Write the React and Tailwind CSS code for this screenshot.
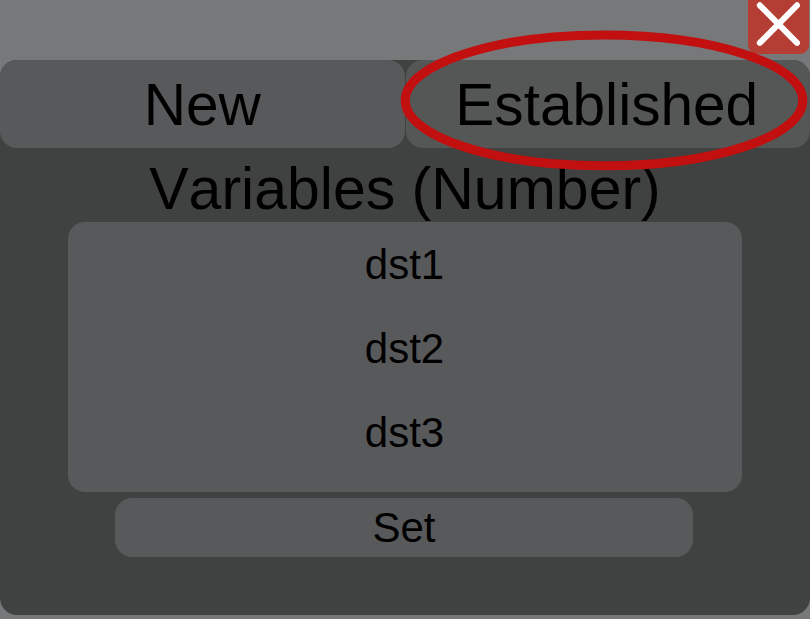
const variables = ["dst1", "dst2", "dst3"];

function CloseButton() {
  return (
    <button
      aria-label="Close"
      className="flex h-[54px] w-[61px] justify-center rounded-b-[9px] bg-[#b43e34]"
    >
      <svg width="61" height="54" viewBox="0 0 61 54" fill="none">
        <path d="M11.8 5.3 49 42.9M49 5.3 11.8 42.9" stroke="#fff" strokeWidth="6" strokeLinecap="round" />
      </svg>
    </button>
  );
}

export default function App() {
  return (
    <div className="relative flex h-[619px] w-[810px] flex-col overflow-hidden bg-[#77787a] font-['Liberation_Sans',Arial,sans-serif] text-black">
      <header className="flex h-[60px] shrink-0 justify-end pr-px">
        <CloseButton />
      </header>

      <main className="flex h-[555px] flex-col items-center rounded-[17px] bg-[#404241]">
        <div className="grid h-[88px] w-full shrink-0 grid-cols-2 gap-px text-[58.6px] leading-[90px]">
          <button className="h-[88px] rounded-[17px] bg-[#58595b]">New</button>
          <button className="h-[88px] rounded-[17px] bg-[#555756] pr-[2px]">Established</button>
        </div>

        <h1 className="h-[74px] shrink-0 whitespace-nowrap text-[59px] leading-[83px] [font-kerning:none]">
          Variables (Number)
        </h1>

        <ul className="flex h-[270px] w-[674px] shrink-0 flex-col rounded-[17px] bg-[#58595b] pr-px text-center text-[42px] leading-[86px]">
          {variables.map((name) => (
            <li key={name} className="h-[84px]">{name}</li>
          ))}
        </ul>

        <button className="mr-[2px] mt-[6px] h-[59px] w-[578px] shrink-0 rounded-[17px] bg-[#58595b] text-[42px] leading-[59px]">
          Set
        </button>
      </main>

      <svg className="pointer-events-none absolute inset-0" width="810" height="619" viewBox="0 0 810 619" fill="none">
        <ellipse cx="604" cy="100.4" rx="198.8" ry="65.4" stroke="#c21010" strokeWidth="9" />
      </svg>
    </div>
  );
}
